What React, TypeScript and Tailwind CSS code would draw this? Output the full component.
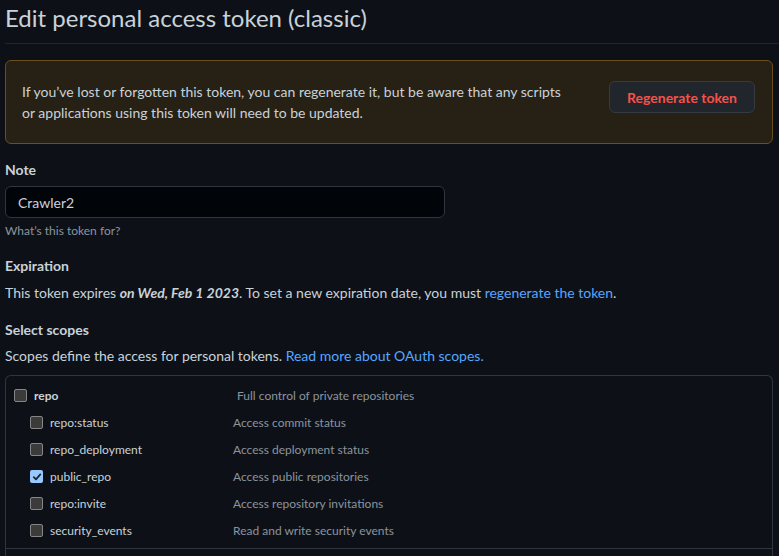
import React from "react";

const font = { fontFamily: 'Lato, "Noto Sans", sans-serif' };

function Box({ checked }: { checked?: boolean }) {
  if (checked) {
    return (
      <span className="flex h-[13px] w-[13px] shrink-0 items-center justify-center rounded-[2px] bg-[#99c8ff]">
        <svg width="10" height="10" viewBox="0 0 10 10">
          <path d="M1.8 5.2 L4 7.3 L8.3 2.4" stroke="#1c2633" strokeWidth="1.8" fill="none" strokeLinecap="round" strokeLinejoin="round" />
        </svg>
      </span>
    );
  }
  return <span className="block h-[13px] w-[13px] shrink-0 rounded-[2px] border border-[#858585] bg-[#3b3b3b]" />;
}

const subs: [string, string, boolean][] = [
  ["repo:status", "Access commit status", false],
  ["repo_deployment", "Access deployment status", false],
  ["public_repo", "Access public repositories", true],
  ["repo:invite", "Access repository invitations", false],
  ["security_events", "Read and write security events", false],
];

export default function App() {
  return (
    <div style={font} className="h-[556px] w-[779px] overflow-hidden bg-[#0d1117] text-[14px] text-[#c9d1d9]">
      <div className="ml-[5px] border-b border-[#21262d] pb-[7px]">
        <h2 className="text-[24px] font-normal leading-[36px] text-[#c9d1d9]">Edit personal access token (classic)</h2>
      </div>

      <div className="mx-[5px] mr-[6px] mt-4 flex items-start rounded-[6px] border border-[#6a4f1c] bg-[#272115] px-4 py-5">
        <p className="flex-1 leading-[21px]">
          If you’ve lost or forgotten this token, you can regenerate it, but be aware that any scripts
          <br />
          or applications using this token will need to be updated.
        </p>
        <button className="mr-px h-8 w-[146px] rounded-[6px] border border-[#363b42] bg-[#21262d] text-[14px] font-bold text-[#f85149]">
          Regenerate token
        </button>
      </div>

      <div className="ml-[5px] mt-[15px]">
        <div className="mb-[6px] font-bold leading-[21px]">Note</div>
        <div className="flex h-8 w-[440px] items-center rounded-[6px] border border-[#30363d] bg-[#010409] px-3 text-[#c9d1d9]">
          Crawler2
        </div>
        <div className="mt-1 text-[12px] leading-[18px] text-[#8b949e]">What’s this token for?</div>
      </div>

      <div className="ml-[5px] mt-[15px]">
        <div className="font-bold leading-[21px]">Expiration</div>
        <p className="mt-[6px] leading-[21px]">
          This token expires <em className="font-bold">on Wed, Feb 1 2023</em>. To set a new expiration date, you must{" "}
          <span className="text-[#58a6ff]">regenerate the token</span>.
        </p>
      </div>

      <div className="ml-[5px] mt-[16px]">
        <div className="font-bold leading-[21px]">Select scopes</div>
        <p className="mt-[5px] leading-[21px]">
          Scopes define the access for personal tokens. <span className="text-[#58a6ff]">Read more about OAuth scopes.</span>
        </p>
      </div>

      <div className="ml-[5px] mr-[6px] mt-[9px] rounded-t-[6px] border border-b-0 border-[#30363d]">
        <div className="border-b border-[#30363d] pb-[4px] pt-[6px]">
          <div className="flex h-[27px] items-center pl-2">
            <Box />
            <span className="ml-[7px] w-[203px] text-[12px] font-bold">repo</span>
            <span className="text-[12px] text-[#8b949e]">Full control of private repositories</span>
          </div>
          {subs.map(([n, d, c]) => (
            <div key={n} className="flex h-[27px] items-center pl-6">
              <Box checked={c} />
              <span className="ml-[7px] w-[183px] text-[12px]">{n}</span>
              <span className="text-[12px] text-[#8b949e]">{d}</span>
            </div>
          ))}
        </div>
        <div className="h-10" />
      </div>
    </div>
  );
}
